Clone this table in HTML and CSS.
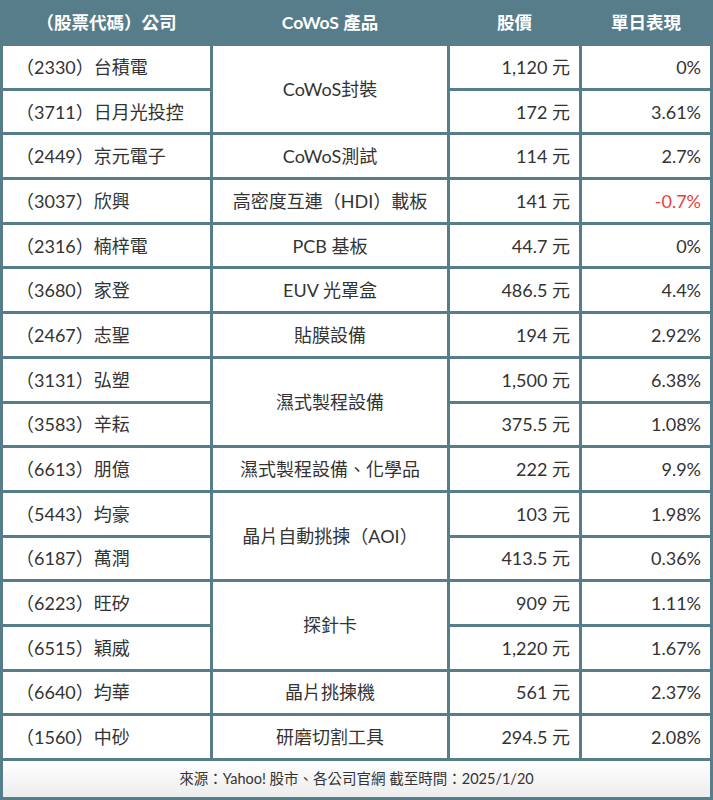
FILE: index.html
```html
<!DOCTYPE html>
<html lang="zh-Hant">
<head>
<meta charset="utf-8">
<link rel="stylesheet" href="styles.css">
</head>
<body>
<table class="tbl">
  <colgroup>
    <col class="c1"><col class="c2"><col class="c3"><col class="c4">
  </colgroup>
  <thead>
    <tr>
      <th>（股票代碼）公司</th>
      <th>CoWoS 產品</th>
      <th>股價</th>
      <th>單日表現</th>
    </tr>
  </thead>
  <tbody>
    <tr><td class="co">（2330）台積電</td><td class="prod" rowspan="2">CoWoS封裝</td><td class="num">1,120 元</td><td class="num">0%</td></tr>
    <tr><td class="co">（3711）日月光投控</td><td class="num">172 元</td><td class="num">3.61%</td></tr>
    <tr><td class="co">（2449）京元電子</td><td class="prod">CoWoS測試</td><td class="num">114 元</td><td class="num">2.7%</td></tr>
    <tr><td class="co">（3037）欣興</td><td class="prod">高密度互連（HDI）載板</td><td class="num">141 元</td><td class="num neg">-0.7%</td></tr>
    <tr><td class="co">（2316）楠梓電</td><td class="prod">PCB 基板</td><td class="num">44.7 元</td><td class="num">0%</td></tr>
    <tr><td class="co">（3680）家登</td><td class="prod">EUV 光罩盒</td><td class="num">486.5 元</td><td class="num">4.4%</td></tr>
    <tr><td class="co">（2467）志聖</td><td class="prod">貼膜設備</td><td class="num">194 元</td><td class="num">2.92%</td></tr>
    <tr><td class="co">（3131）弘塑</td><td class="prod" rowspan="2">濕式製程設備</td><td class="num">1,500 元</td><td class="num">6.38%</td></tr>
    <tr><td class="co">（3583）辛耘</td><td class="num">375.5 元</td><td class="num">1.08%</td></tr>
    <tr><td class="co">（6613）朋億</td><td class="prod">濕式製程設備、化學品</td><td class="num">222 元</td><td class="num">9.9%</td></tr>
    <tr><td class="co">（5443）均豪</td><td class="prod" rowspan="2">晶片自動挑揀（AOI）</td><td class="num">103 元</td><td class="num">1.98%</td></tr>
    <tr><td class="co">（6187）萬潤</td><td class="num">413.5 元</td><td class="num">0.36%</td></tr>
    <tr><td class="co">（6223）旺矽</td><td class="prod" rowspan="2">探針卡</td><td class="num">909 元</td><td class="num">1.11%</td></tr>
    <tr><td class="co">（6515）穎威</td><td class="num">1,220 元</td><td class="num">1.67%</td></tr>
    <tr><td class="co">（6640）均華</td><td class="prod">晶片挑揀機</td><td class="num">561 元</td><td class="num">2.37%</td></tr>
    <tr><td class="co">（1560）中砂</td><td class="prod">研磨切割工具</td><td class="num">294.5 元</td><td class="num">2.08%</td></tr>
  </tbody>
  <tfoot>
    <tr><td class="foot" colspan="4">來源：Yahoo! 股市、各公司官網 截至時間：2025/1/20</td></tr>
  </tfoot>
</table>
</body>
</html>
```

FILE: styles.css
```css
html, body {
  margin: 0;
  padding: 0;
  background: #ffffff;
}

body {
  font-family: Lato, "Noto Sans CJK TC", sans-serif;
  color: #333333;
}

.tbl {
  width: 713px;
  border-collapse: separate;
  border-spacing: 3px;
  background: #567d89;
  table-layout: fixed;
}

.c1 { width: 207px; }
.c2 { width: 234px; }
.c3 { width: 129px; }
.c4 { width: 128px; }

.tbl th {
  height: 40px;
  padding: 0 0 3px;
  box-sizing: border-box;
  color: #ffffff;
  font-weight: 700;
  font-size: 17.5px;
  text-align: center;
  vertical-align: middle;
  white-space: nowrap;
}

.tbl td {
  background: #ffffff;
  height: 41.7px;
  box-sizing: border-box;
  padding: 0 10px;
  font-size: 18px;
  line-height: 22px;
  vertical-align: middle;
  white-space: nowrap;
}

.tbl td.co {
  text-align: left;
  padding-left: 13px;
}

.tbl td.prod {
  text-align: center;
}

.tbl td.num {
  text-align: right;
  padding-right: 9px;
}

.tbl td.neg {
  color: #e8403a;
}

.tbl td.foot {
  height: 36px;
  text-align: center;
  font-size: 14.5px;
  background: linear-gradient(#ffffff, #ececec);
}
```
